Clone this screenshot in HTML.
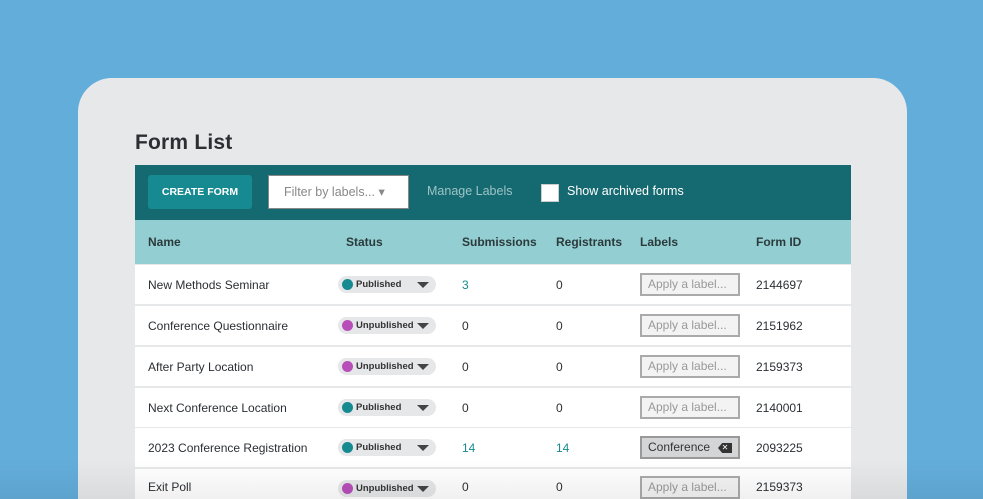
<!DOCTYPE html>
<html><head><style>
*{margin:0;padding:0;box-sizing:border-box}
html,body{width:983px;height:499px;overflow:hidden}
body{background:#63addb;font-family:"Liberation Sans",sans-serif;position:relative}
.panel{position:absolute;left:78px;top:78px;width:829px;height:421px;background:#e7e8ea;border-radius:34px 34px 0 0}
h1{position:absolute;left:135px;top:131px;font-size:21px;font-weight:bold;color:#2b2f33;letter-spacing:0.2px}
.tb{position:absolute;left:135px;top:165px;width:716px;height:55px;background:#156970}
.btn{position:absolute;left:13px;top:10px;width:104px;height:34px;background:#178a91;border-radius:3px;color:#fff;font-size:10.5px;font-weight:bold;text-align:center;line-height:34px}
.flt{position:absolute;left:133px;top:10px;width:141px;height:34px;background:#fff;border:1px solid #888;color:#888;font-size:12.5px;line-height:32px;padding-left:15px}
.ml{position:absolute;left:292px;top:19px;color:#9cc4c6;font-size:12.5px}
.cb{position:absolute;left:406px;top:19px;width:18px;height:18px;background:#fff;border:1px solid #ccc}
.sa{position:absolute;left:432px;top:19px;color:#fff;font-size:12.5px}
.hd{position:absolute;left:135px;top:220px;width:716px;height:44px;background:#93cfd2;font-size:12px;font-weight:bold;color:#2b3a3c}
.hd span{position:absolute;top:15px}
.row{position:absolute;left:135px;width:716px;height:39px;background:#fff;font-size:12px;color:#2b2f33}
.row>span{position:absolute;top:13px}
.pill{position:absolute;left:203px;top:11px;width:98px;height:17px;background:#e6e7e9;border-radius:9px;font-size:9.5px;font-weight:bold;color:#333;line-height:17px;padding-left:18px}
.pill i{position:absolute;left:4px;top:3px;width:11px;height:11px;border-radius:50%}
.pill b{position:absolute;right:7px;top:6px;border-left:6px solid transparent;border-right:6px solid transparent;border-top:6px solid #444}
.lb{position:absolute;left:505px;top:8px;width:100px;height:23px;border:2px solid #aaa;background:#f3f3f3;color:#999;font-size:12px;line-height:19px;padding-left:6px}
.t{color:#178a91}
.fade{position:absolute;left:0;top:460px;width:983px;height:39px;background:linear-gradient(rgba(0,0,0,0),rgba(0,0,0,0.06))}
</style></head><body>
<div class="panel"></div>
<h1>Form List</h1>
<div class="tb"><div class="btn">CREATE FORM</div><div class="flt">Filter by labels... ▾</div><div class="ml">Manage Labels</div><div class="cb"></div><div class="sa">Show archived forms</div></div>
<div class="hd"><span style="left:13px">Name</span><span style="left:211px">Status</span><span style="left:327px">Submissions</span><span style="left:421px">Registrants</span><span style="left:505px">Labels</span><span style="left:621px">Form ID</span></div>

<div class="row" style="top:265px"><span style="left:13px">New Methods Seminar</span><div class="pill"><i style="background:#178a91"></i>Published<b></b></div><span class="t" style="left:327px">3</span><span style="left:421px">0</span><div class="lb">Apply a label...</div><span style="left:621px">2144697</span></div>
<div class="row" style="top:306px"><span style="left:13px">Conference Questionnaire</span><div class="pill"><i style="background:#b84fb9"></i>Unpublished<b></b></div><span style="left:327px">0</span><span style="left:421px">0</span><div class="lb">Apply a label...</div><span style="left:621px">2151962</span></div>
<div class="row" style="top:347px"><span style="left:13px">After Party Location</span><div class="pill"><i style="background:#b84fb9"></i>Unpublished<b></b></div><span style="left:327px">0</span><span style="left:421px">0</span><div class="lb">Apply a label...</div><span style="left:621px">2159373</span></div>
<div class="row" style="top:388px"><span style="left:13px">Next Conference Location</span><div class="pill"><i style="background:#178a91"></i>Published<b></b></div><span style="left:327px">0</span><span style="left:421px">0</span><div class="lb">Apply a label...</div><span style="left:621px">2140001</span></div>
<div class="row" style="top:428px"><span style="left:13px">2023 Conference Registration</span><div class="pill"><i style="background:#178a91"></i>Published<b></b></div><span class="t" style="left:327px">14</span><span class="t" style="left:421px">14</span><div class="lb" style="background:#d4d5d7;border-color:#999;color:#333">Conference <span style="position:absolute;right:6px;top:5px;width:14px;height:10px;background:#333;color:#fff;font-size:8px;line-height:10px;text-align:center;clip-path:polygon(30% 0,100% 0,100% 100%,30% 100%,0 50%)">✕</span></div><span style="left:621px">2093225</span></div>
<div class="row" style="top:469px;height:40px"><span style="left:13px;top:11px">Exit Poll</span><div class="pill" style="top:11px"><i style="background:#b84fb9"></i>Unpublished<b></b></div><span style="left:327px;top:11px">0</span><span style="left:421px;top:11px">0</span><div class="lb" style="top:7px">Apply a label...</div><span style="left:621px;top:11px">2159373</span></div>
<div class="fade"></div>
</body></html>
